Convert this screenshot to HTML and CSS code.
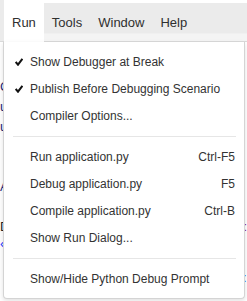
FILE: index.html
```html
<!DOCTYPE html>
<html lang="en">
<head>
  <meta charset="UTF-8">
  <title>Run Menu</title>
  <link rel="stylesheet" href="styles.css">
</head>
<body>

<div class="menubar">
  <div class="gutter"></div>
  <div class="tab active">Run</div>
  <div class="tab">Tools</div>
  <div class="tab">Window</div>
  <div class="tab">Help</div>
  <div class="tab fill"></div>
</div>

<!-- editor behind the open menu, only its edges show -->
<div class="editor">
  <div class="line navy">C</div>
  <div class="line navy">u</div>
  <div class="line navy">u</div>
  <div class="line"></div>
  <div class="line"></div>
  <div class="line navy">A</div>
  <div class="line"></div>
  <div class="line dark">D<span class="purple">:</span></div>
  <div class="line short blue">«</div>
  <div class="line"></div>
  <div class="line tail blue">:</div>
</div>

<div class="dropdown">
  <div class="item checked">
    <span class="check"><svg width="8" height="8" viewBox="0 0 8 8"><polyline points="0.7,4 3,6.7 7.4,0.9" fill="none" stroke="#111" stroke-width="2"/></svg></span>
    <span class="label">Show Debugger at Break</span>
  </div>
  <div class="item checked">
    <span class="check"><svg width="8" height="8" viewBox="0 0 8 8"><polyline points="0.7,4 3,6.7 7.4,0.9" fill="none" stroke="#111" stroke-width="2"/></svg></span>
    <span class="label">Publish Before Debugging Scenario</span>
  </div>
  <div class="item">
    <span class="check"></span>
    <span class="label">Compiler Options...</span>
  </div>
  <div class="separator"></div>
  <div class="item">
    <span class="check"></span>
    <span class="label">Run application.py</span>
    <span class="shortcut">Ctrl-F5</span>
  </div>
  <div class="item">
    <span class="check"></span>
    <span class="label">Debug application.py</span>
    <span class="shortcut">F5</span>
  </div>
  <div class="item">
    <span class="check"></span>
    <span class="label">Compile application.py</span>
    <span class="shortcut">Ctrl-B</span>
  </div>
  <div class="item">
    <span class="check"></span>
    <span class="label">Show Run Dialog...</span>
  </div>
  <div class="separator"></div>
  <div class="item">
    <span class="check"></span>
    <span class="label">Show/Hide Python Debug Prompt</span>
  </div>
</div>

</body>
</html>
```

FILE: styles.css
```css
body {
  margin: 0;
  font-family: "Liberation Sans", Arial, sans-serif;
  background: #fff;
  color: #333;
  overflow: hidden;
}
.menubar {
  display: flex;
  height: 42px;
}
.gutter {
  width: 4px;
  background: #ebebeb;
  border-bottom: 1px solid #dadada;
}
.tab {
  display: flex;
  align-items: center;
  padding: 0 8px;
  font-size: 13px;
  color: #2f2f2f;
  border-top: 3px solid #fff;
  border-bottom: 1px solid #dadada;
  background: linear-gradient(#ebebeb 0, #ebebeb 78%, #f4f4f4 82%, #f4f4f4 100%);
}
.tab.active {
  background: #fff;
  border-color: #fff;
}
.tab.fill {
  flex: 1;
}
.editor {
  padding-top: 35px;
  font-size: 13px;
}
.line {
  height: 20px;
  line-height: 20px;
  white-space: nowrap;
}
.line.short {
  height: 14px;
  line-height: 14px;
}
.line.tail {
  height: 14px;
  line-height: 14px;
  padding-left: 243px;
}
.navy { color: #1f2a7a; }
.dark { color: #222; }
.blue { color: #1a3cff; }
.purple {
  color: #8a2a8a;
  margin-left: 234px;
}
.dropdown {
  position: absolute;
  left: 3px;
  top: 42px;
  width: 242px;
  box-sizing: border-box;
  padding: 6px 0;
  background: #fff;
  border: 1px solid #d4d4d4;
  border-top: none;
  border-radius: 0 0 4px 4px;
  box-shadow: 0 2px 5px rgba(0, 0, 0, 0.12);
  font-size: 12px;
}
.item {
  display: flex;
  align-items: center;
  height: 27px;
  padding: 0 9px 0 11px;
}
.check {
  width: 15px;
  flex: none;
  display: flex;
  align-items: center;
}
.label {
  flex: 1;
  white-space: nowrap;
}
.shortcut {
  white-space: nowrap;
}
.separator {
  height: 1px;
  background: #e6e6e6;
  margin: 7px 8px 6px 9px;
}
```
